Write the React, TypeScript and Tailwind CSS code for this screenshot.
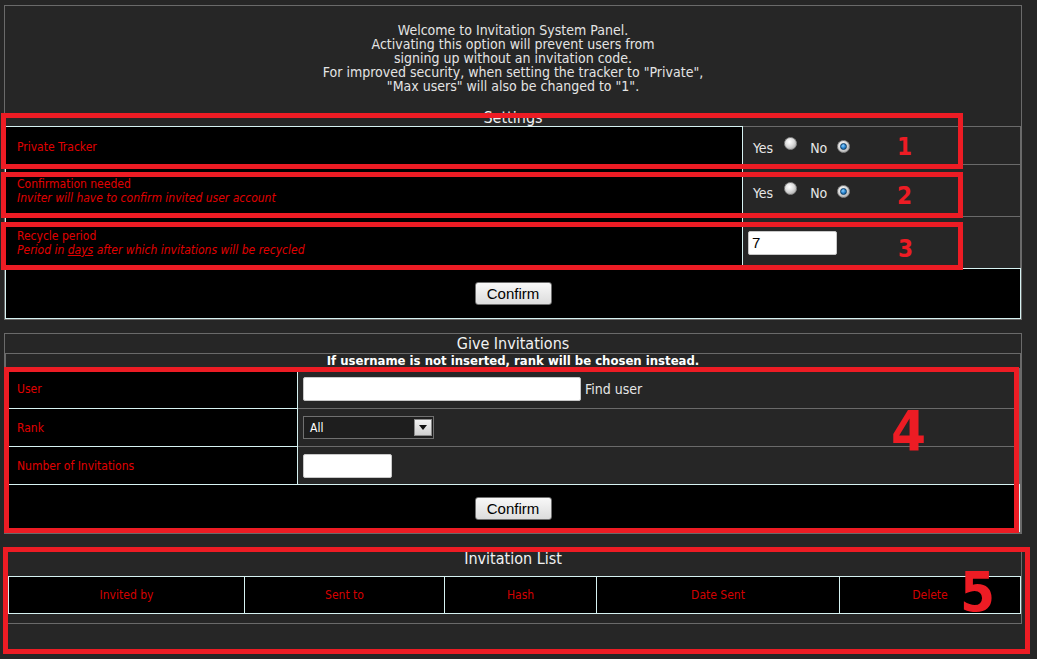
const sans = "font-['DejaVu_Sans_Condensed','DejaVu_Sans',sans-serif]";
const light = "border-[#d6f2f2]";
const gray = "border-[#6a6a6a]";

function Radio({ checked }: { checked?: boolean }) {
  return (
    <span className="inline-flex w-[13px] h-[13px] items-center justify-center rounded-full border border-[#8c8c8c] bg-[radial-gradient(circle_at_40%_35%,#ffffff_0,#dcdcdc_45%,#9a9a9a_100%)]">
      {checked && (
        <span className="w-[7px] h-[7px] rounded-full border border-[#0d3d66] bg-[radial-gradient(circle_at_40%_35%,#8fd0ff_0,#2a86d0_50%,#0f4f8a_100%)]" />
      )}
    </span>
  );
}

function YesNo() {
  return (
    <div className="flex items-center text-[14px] text-[#e6e6e6]">
      <span className="mt-[6px]">Yes</span>
      <span className="ml-[11px]"><Radio /></span>
      <span className="ml-[13px] mt-[6px]">No</span>
      <span className="ml-[10px]"><Radio checked /></span>
    </div>
  );
}

function Button() {
  return (
    <button className="w-[77px] h-[23px] rounded-[3px] border border-[#707070] bg-[linear-gradient(#f8f8f8,#dcdcdc)] text-[15px] text-black font-['Liberation_Sans',Arial,sans-serif] leading-none">
      Confirm
    </button>
  );
}

function Mark({ className }: { className: string }) {
  return <div className={`absolute border-[5px] border-[#ed1c24] pointer-events-none ${className}`} />;
}

export default function App() {
  return (
    <div className={`relative h-[659px] overflow-hidden bg-[#262626] pt-[5px] pl-[4px] ${sans}`}>
      {/* Settings */}
      <div className={`w-[1018px] border ${gray}`}>
        <div className="pt-[17px] text-center text-[14px] leading-[14px] text-[#e4e4e4]">
          <p>Welcome to Invitation System Panel.</p>
          <p>Activating this option will prevent users from</p>
          <p>signing up without an invitation code.</p>
          <p>For improved security, when setting the tracker to "Private",</p>
          <p>"Max users" will also be changed to "1".</p>
        </div>
        <div className="mt-[17px] h-[16px] text-center text-[16px] leading-[16px] text-[#f2f2f2]">Settings</div>

        <div className="flex h-[38px]">
          <div className={`w-[738px] bg-black border-t border-l border-r ${light} flex flex-col justify-center pl-[11px] text-[12px] leading-[14px] text-[#e00000]`}>
            <span className="mt-[2px]">Private Tracker</span>
          </div>
          <div className={`flex-1 border-t border-r ${gray} flex items-center pl-[10px]`}>
            <YesNo />
          </div>
        </div>
        <div className="flex h-[52px]">
          <div className={`w-[738px] bg-black border-t border-l border-r ${light} flex flex-col justify-center pl-[11px] text-[12px] leading-[14px] text-[#e00000]`}>
            <span>Confirmation needed</span>
            <span className="italic">Inviter will have to confirm invited user account</span>
          </div>
          <div className={`flex-1 border-t border-r ${gray} flex items-center pl-[10px]`}>
            <YesNo />
          </div>
        </div>
        <div className="flex h-[52px]">
          <div className={`w-[738px] bg-black border-t border-l border-r ${light} flex flex-col justify-center pl-[11px] text-[12px] leading-[14px] text-[#e00000]`}>
            <span>Recycle period</span>
            <span className="italic">
              Period in <span className="underline">days</span> after which invitations will be recycled
            </span>
          </div>
          <div className={`flex-1 border-t border-r ${gray} flex items-center pl-[5px]`}>
            <input
              defaultValue="7"
              className="w-[89px] h-[24px] rounded-[2px] border border-[#c8c8c8] bg-white px-[3px] text-[15px] text-black font-['Liberation_Sans',Arial,sans-serif] outline-none"
            />
          </div>
        </div>
        <div className={`h-[51px] bg-black border ${light} flex items-center justify-center`}>
          <Button />
        </div>
      </div>

      {/* Give Invitations */}
      <div className={`mt-[13px] w-[1018px] border ${gray}`}>
        <div className="h-[19px] text-center text-[16px] leading-[19px] text-[#f2f2f2]">Give Invitations</div>
        <div className={`border ${gray}`}>
          <div className="h-[14px] text-center text-[13px] font-bold leading-[14px] text-white">
            If username is not inserted, rank will be chosen instead.
          </div>
          <div className="flex h-[40px]">
            <div className={`w-[292px] bg-black border-t border-l border-r ${light} flex items-center pl-[10px] text-[12px] text-[#e00000]`}>
              User
            </div>
            <div className={`flex-1 border-t border-r ${gray} flex items-center pl-[5px]`}>
              <input className="w-[278px] h-[24px] rounded-[2px] border border-[#c8c8c8] bg-white outline-none" />
              <span className="ml-[4px] mt-[2px] text-[14px] text-[#e6e6e6]">Find user</span>
            </div>
          </div>
          <div className="flex h-[38px]">
            <div className={`w-[292px] bg-black border-t border-l border-r ${light} flex items-center pl-[10px] text-[12px] text-[#e00000]`}>
              Rank
            </div>
            <div className={`flex-1 border-t border-r ${gray} flex items-center pl-[5px]`}>
              <div className="w-[131px] h-[23px] border border-[#707070] bg-[#1e1e1e] flex items-center justify-between pl-[6px] pr-[1px]">
                <span className="text-[12px] text-white">All</span>
                <span className="w-[18px] h-[17px] border border-[#8a8a8a] bg-[linear-gradient(#f4f4f4,#cfcfcf)] flex items-center justify-center">
                  <svg width="8" height="5" viewBox="0 0 8 5">
                    <path d="M0 0H8L4 5Z" fill="#111" />
                  </svg>
                </span>
              </div>
            </div>
          </div>
          <div className="flex h-[38px]">
            <div className={`w-[292px] bg-black border-t border-l border-r ${light} flex items-center pl-[10px] text-[12px] text-[#e00000]`}>
              Number of Invitations
            </div>
            <div className={`flex-1 border-t border-r ${gray} flex items-center pl-[5px]`}>
              <input className="w-[89px] h-[24px] rounded-[2px] border border-[#c8c8c8] bg-white outline-none" />
            </div>
          </div>
          <div className={`h-[48px] bg-black border ${light} flex items-center justify-center`}>
            <Button />
          </div>
        </div>
      </div>

      {/* Invitation List */}
      <div className={`mt-[15px] w-[1018px] border ${gray} pb-[9px]`}>
        <div className="h-[18px] text-center text-[16px] leading-[18px] text-[#f2f2f2]">Invitation List</div>
        <div className={`ml-[3px] mt-[8px] flex h-[38px] border-y border-r ${light} bg-black text-[12px] text-[#d40000]`}>
          {[
            ["Invited by", "w-[236px]"],
            ["Sent to", "w-[200px]"],
            ["Hash", "w-[152px]"],
            ["Date Sent", "w-[243px]"],
            ["Delete", "flex-1"],
          ].map(([t, w]) => (
            <div key={t} className={`${w} border-l ${light} flex items-center justify-center`}>
              {t}
            </div>
          ))}
        </div>
      </div>

      {/* annotations */}
      <Mark className="left-[1px] top-[113px] w-[962px] h-[56px]" />
      <Mark className="left-[1px] top-[172px] w-[962px] h-[46px]" />
      <Mark className="left-[1px] top-[222px] w-[962px] h-[48px]" />
      <Mark className="left-[4px] top-[367px] w-[1015px] h-[166px]" />
      <Mark className="left-[3px] top-[547px] w-[1027px] h-[107px]" />

      <div className="absolute left-[897px] top-[135px] text-[24px] font-bold leading-none text-[#ed1c24]">1</div>
      <div className="absolute left-[897px] top-[184px] text-[24px] font-bold leading-none text-[#ed1c24]">2</div>
      <div className="absolute left-[898px] top-[237px] text-[24px] font-bold leading-none text-[#ed1c24]">3</div>
      <div className="absolute left-[891px] top-[403px] text-[56px] font-bold leading-none text-[#ed1c24]">4</div>
      <div className="absolute left-[960px] top-[564px] text-[56px] font-bold leading-none text-[#ed1c24]">5</div>
    </div>
  );
}
